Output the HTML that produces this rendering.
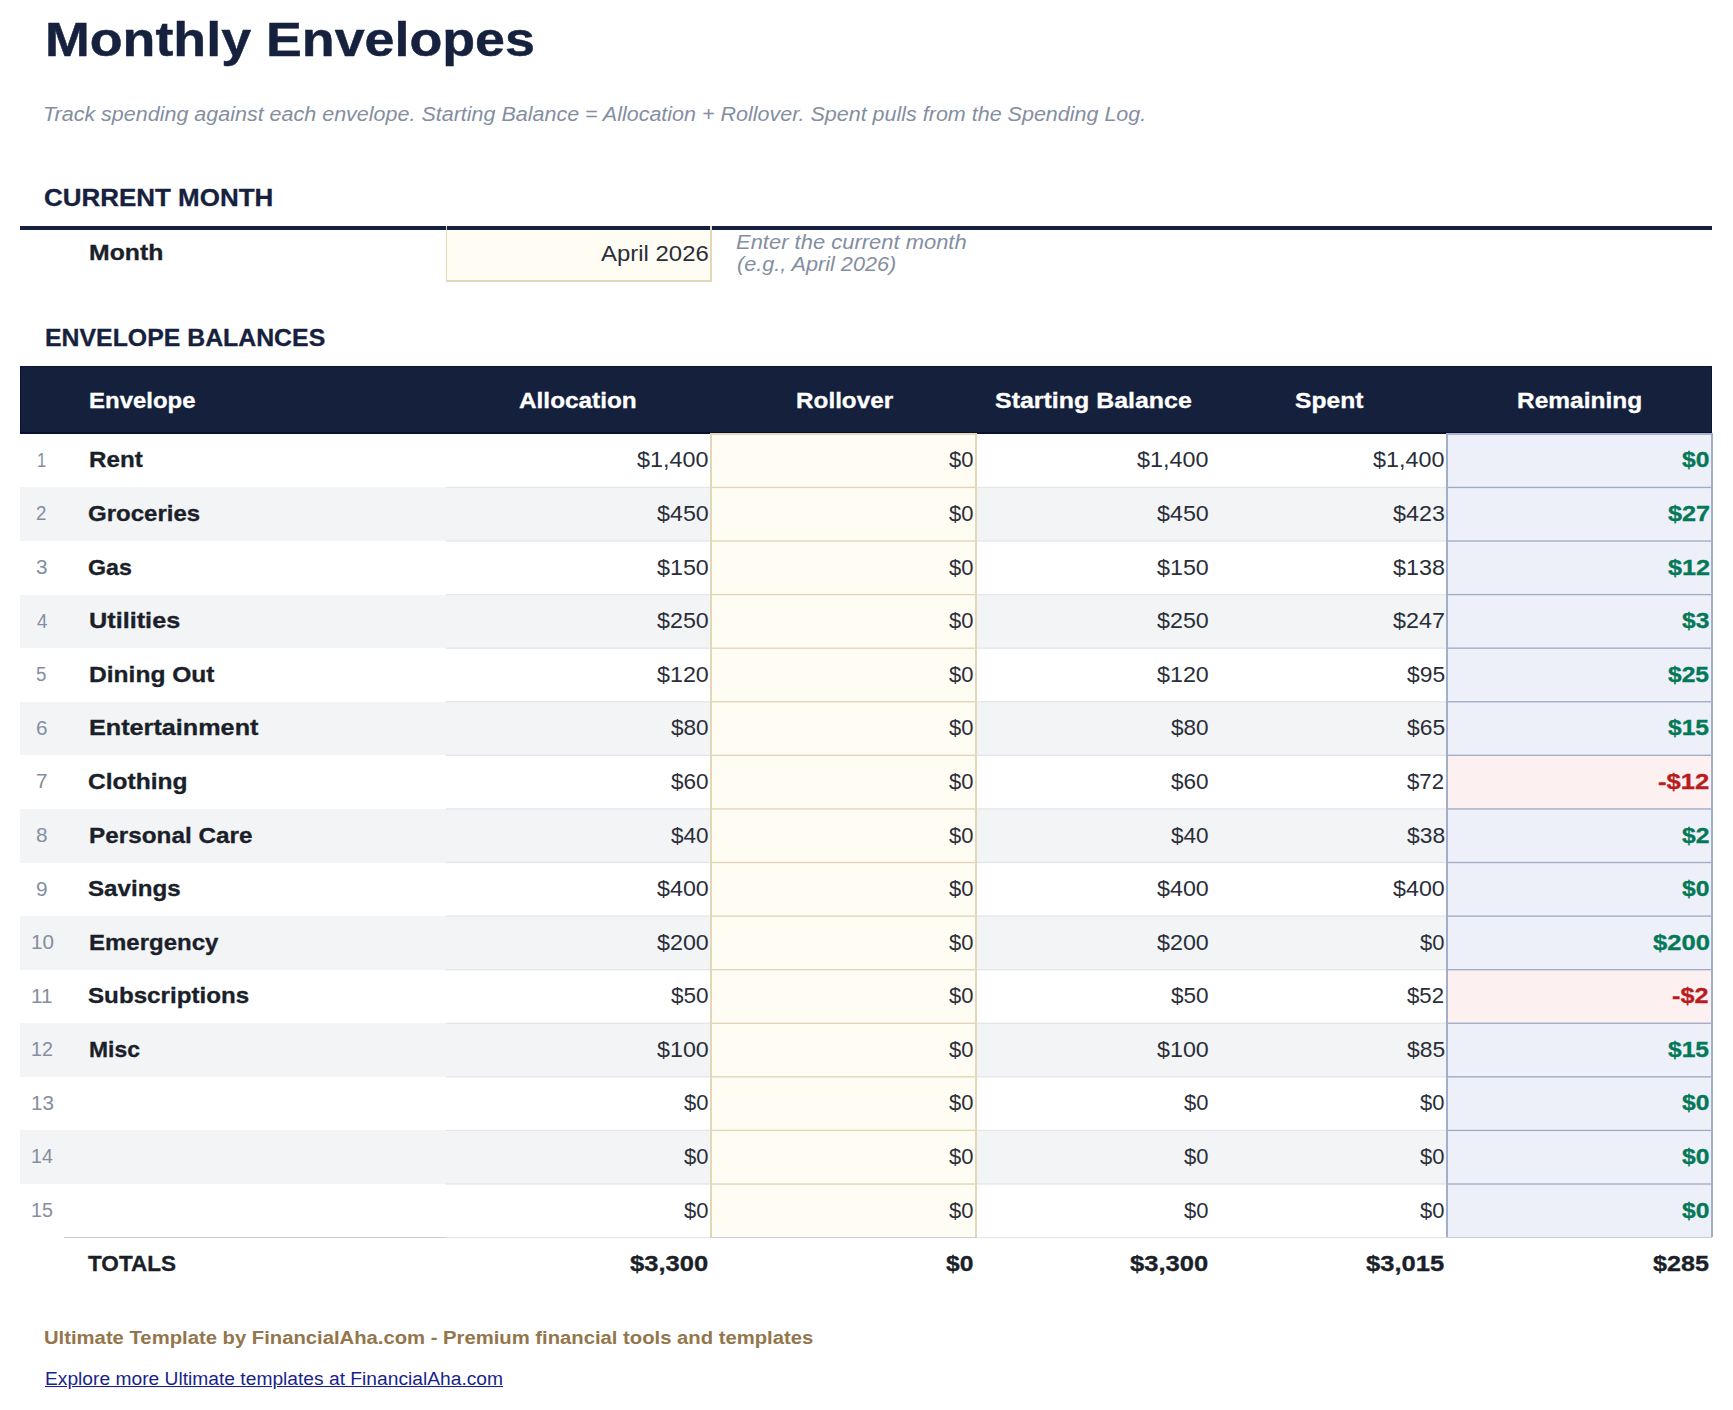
<!DOCTYPE html>
<html><head><meta charset="utf-8"><style>
html,body{margin:0;padding:0;background:#fff;}
body{width:1733px;height:1410px;position:relative;overflow:hidden;font-family:"Liberation Sans", sans-serif;}
.t{position:absolute;line-height:0;white-space:nowrap;}
.r{position:absolute;}
</style></head><body>
<div class="r" style="left:20px;top:226px;width:1692px;height:4px;background:#16213e;"></div>
<div class="r" style="left:446px;top:226px;width:1px;height:56px;background:#e2d8b8;"></div>
<div class="r" style="left:710px;top:226px;width:2px;height:56px;background:#e2d8b8;"></div>
<div class="r" style="left:447px;top:231px;width:263px;height:49px;background:#fffcf4;"></div>
<div class="r" style="left:446px;top:280px;width:266px;height:2px;background:#e2d8b8;"></div>
<div class="r" style="left:20px;top:366px;width:1692px;height:68px;background:#15213c;"></div>
<div class="r" style="left:20px;top:366px;width:1692px;height:1px;background:#0b1533;"></div>
<div class="r" style="left:20px;top:366px;width:1px;height:68px;background:#0b1533;"></div>
<div class="r" style="left:1711px;top:366px;width:1px;height:68px;background:#0b1533;"></div>
<div class="r" style="left:20px;top:432px;width:1692px;height:2px;background:#081130;"></div>
<div class="r" style="left:711px;top:433.85px;width:265px;height:53.58299999999997px;background:#fffcf3;"></div>
<div class="r" style="left:1447px;top:433.85px;width:265px;height:53.58299999999997px;background:#edf0f8;"></div>
<div class="r" style="left:20px;top:487.433px;width:1692px;height:53.58299999999997px;background:#f3f4f6;"></div>
<div class="r" style="left:711px;top:487.433px;width:265px;height:53.58299999999997px;background:#fffcf3;"></div>
<div class="r" style="left:1447px;top:487.433px;width:265px;height:53.58299999999997px;background:#edf0f8;"></div>
<div class="r" style="left:711px;top:541.0160000000001px;width:265px;height:53.58299999999997px;background:#fffcf3;"></div>
<div class="r" style="left:1447px;top:541.0160000000001px;width:265px;height:53.58299999999997px;background:#edf0f8;"></div>
<div class="r" style="left:20px;top:594.599px;width:1692px;height:53.58299999999997px;background:#f3f4f6;"></div>
<div class="r" style="left:711px;top:594.599px;width:265px;height:53.58299999999997px;background:#fffcf3;"></div>
<div class="r" style="left:1447px;top:594.599px;width:265px;height:53.58299999999997px;background:#edf0f8;"></div>
<div class="r" style="left:711px;top:648.182px;width:265px;height:53.58299999999997px;background:#fffcf3;"></div>
<div class="r" style="left:1447px;top:648.182px;width:265px;height:53.58299999999997px;background:#edf0f8;"></div>
<div class="r" style="left:20px;top:701.765px;width:1692px;height:53.58299999999997px;background:#f3f4f6;"></div>
<div class="r" style="left:711px;top:701.765px;width:265px;height:53.58299999999997px;background:#fffcf3;"></div>
<div class="r" style="left:1447px;top:701.765px;width:265px;height:53.58299999999997px;background:#edf0f8;"></div>
<div class="r" style="left:711px;top:755.348px;width:265px;height:53.58299999999997px;background:#fffcf3;"></div>
<div class="r" style="left:1447px;top:755.348px;width:265px;height:53.58299999999997px;background:#fdf0f1;"></div>
<div class="r" style="left:20px;top:808.931px;width:1692px;height:53.58299999999997px;background:#f3f4f6;"></div>
<div class="r" style="left:711px;top:808.931px;width:265px;height:53.58299999999997px;background:#fffcf3;"></div>
<div class="r" style="left:1447px;top:808.931px;width:265px;height:53.58299999999997px;background:#edf0f8;"></div>
<div class="r" style="left:711px;top:862.514px;width:265px;height:53.58299999999997px;background:#fffcf3;"></div>
<div class="r" style="left:1447px;top:862.514px;width:265px;height:53.58299999999997px;background:#edf0f8;"></div>
<div class="r" style="left:20px;top:916.097px;width:1692px;height:53.58299999999997px;background:#f3f4f6;"></div>
<div class="r" style="left:711px;top:916.097px;width:265px;height:53.58299999999997px;background:#fffcf3;"></div>
<div class="r" style="left:1447px;top:916.097px;width:265px;height:53.58299999999997px;background:#edf0f8;"></div>
<div class="r" style="left:711px;top:969.68px;width:265px;height:53.58299999999997px;background:#fffcf3;"></div>
<div class="r" style="left:1447px;top:969.68px;width:265px;height:53.58299999999997px;background:#fdf0f1;"></div>
<div class="r" style="left:20px;top:1023.263px;width:1692px;height:53.58299999999997px;background:#f3f4f6;"></div>
<div class="r" style="left:711px;top:1023.263px;width:265px;height:53.58299999999997px;background:#fffcf3;"></div>
<div class="r" style="left:1447px;top:1023.263px;width:265px;height:53.58299999999997px;background:#edf0f8;"></div>
<div class="r" style="left:711px;top:1076.846px;width:265px;height:53.583000000000084px;background:#fffcf3;"></div>
<div class="r" style="left:1447px;top:1076.846px;width:265px;height:53.583000000000084px;background:#edf0f8;"></div>
<div class="r" style="left:20px;top:1130.429px;width:1692px;height:53.583000000000084px;background:#f3f4f6;"></div>
<div class="r" style="left:711px;top:1130.429px;width:265px;height:53.583000000000084px;background:#fffcf3;"></div>
<div class="r" style="left:1447px;top:1130.429px;width:265px;height:53.583000000000084px;background:#edf0f8;"></div>
<div class="r" style="left:711px;top:1184.0120000000002px;width:265px;height:53.583000000000084px;background:#fffcf3;"></div>
<div class="r" style="left:1447px;top:1184.0120000000002px;width:265px;height:53.583000000000084px;background:#edf0f8;"></div>
<div class="r" style="left:710px;top:433px;width:267px;height:2px;background:#e4d9b9;"></div>
<div class="r" style="left:1446px;top:433px;width:267px;height:2px;background:#abb4cd;"></div>
<div class="r" style="left:710px;top:433px;width:2px;height:804px;background:#e2d8b8;"></div>
<div class="r" style="left:975px;top:433px;width:2px;height:804px;background:#e2d8b8;"></div>
<div class="r" style="left:1446px;top:433px;width:2px;height:804px;background:#a3aec8;"></div>
<div class="r" style="left:1711px;top:433px;width:2px;height:804px;background:#a3aec8;"></div>
<div class="r" style="left:64px;top:1237px;width:1648px;height:1px;background:#c8cdd8;"></div>
<svg width="1733" height="1410" style="position:absolute;left:0;top:0"><rect x="446" y="486.767" width="264" height="1.333" fill="#e4e6ec"/><rect x="977" y="486.767" width="234" height="1.333" fill="#e4e6ec"/><rect x="1211" y="486.767" width="235" height="1.333" fill="#e4e6ec"/><rect x="446" y="540.349" width="264" height="1.333" fill="#e4e6ec"/><rect x="977" y="540.349" width="234" height="1.333" fill="#e4e6ec"/><rect x="1211" y="540.349" width="235" height="1.333" fill="#e4e6ec"/><rect x="446" y="593.933" width="264" height="1.333" fill="#e4e6ec"/><rect x="977" y="593.933" width="234" height="1.333" fill="#e4e6ec"/><rect x="1211" y="593.933" width="235" height="1.333" fill="#e4e6ec"/><rect x="446" y="647.515" width="264" height="1.333" fill="#e4e6ec"/><rect x="977" y="647.515" width="234" height="1.333" fill="#e4e6ec"/><rect x="1211" y="647.515" width="235" height="1.333" fill="#e4e6ec"/><rect x="446" y="701.098" width="264" height="1.333" fill="#e4e6ec"/><rect x="977" y="701.098" width="234" height="1.333" fill="#e4e6ec"/><rect x="1211" y="701.098" width="235" height="1.333" fill="#e4e6ec"/><rect x="446" y="754.681" width="264" height="1.333" fill="#e4e6ec"/><rect x="977" y="754.681" width="234" height="1.333" fill="#e4e6ec"/><rect x="1211" y="754.681" width="235" height="1.333" fill="#e4e6ec"/><rect x="446" y="808.264" width="264" height="1.333" fill="#e4e6ec"/><rect x="977" y="808.264" width="234" height="1.333" fill="#e4e6ec"/><rect x="1211" y="808.264" width="235" height="1.333" fill="#e4e6ec"/><rect x="446" y="861.847" width="264" height="1.333" fill="#e4e6ec"/><rect x="977" y="861.847" width="234" height="1.333" fill="#e4e6ec"/><rect x="1211" y="861.847" width="235" height="1.333" fill="#e4e6ec"/><rect x="446" y="915.430" width="264" height="1.333" fill="#e4e6ec"/><rect x="977" y="915.430" width="234" height="1.333" fill="#e4e6ec"/><rect x="1211" y="915.430" width="235" height="1.333" fill="#e4e6ec"/><rect x="446" y="969.013" width="264" height="1.333" fill="#e4e6ec"/><rect x="977" y="969.013" width="234" height="1.333" fill="#e4e6ec"/><rect x="1211" y="969.013" width="235" height="1.333" fill="#e4e6ec"/><rect x="446" y="1022.596" width="264" height="1.333" fill="#e4e6ec"/><rect x="977" y="1022.596" width="234" height="1.333" fill="#e4e6ec"/><rect x="1211" y="1022.596" width="235" height="1.333" fill="#e4e6ec"/><rect x="446" y="1076.179" width="264" height="1.333" fill="#e4e6ec"/><rect x="977" y="1076.179" width="234" height="1.333" fill="#e4e6ec"/><rect x="1211" y="1076.179" width="235" height="1.333" fill="#e4e6ec"/><rect x="446" y="1129.763" width="264" height="1.333" fill="#e4e6ec"/><rect x="977" y="1129.763" width="234" height="1.333" fill="#e4e6ec"/><rect x="1211" y="1129.763" width="235" height="1.333" fill="#e4e6ec"/><rect x="446" y="1183.346" width="264" height="1.333" fill="#e4e6ec"/><rect x="977" y="1183.346" width="234" height="1.333" fill="#e4e6ec"/><rect x="1211" y="1183.346" width="235" height="1.333" fill="#e4e6ec"/><rect x="446" y="1236.929" width="264" height="1.333" fill="#e4e6ec"/><rect x="977" y="1236.929" width="234" height="1.333" fill="#e4e6ec"/><rect x="1211" y="1236.929" width="235" height="1.333" fill="#e4e6ec"/><rect x="712" y="486.767" width="263" height="1.333" fill="#e0d5b5"/><rect x="1448" y="486.767" width="263" height="1.333" fill="#a0abc6"/><rect x="712" y="540.350" width="263" height="1.333" fill="#e0d5b5"/><rect x="1448" y="540.350" width="263" height="1.333" fill="#a0abc6"/><rect x="712" y="593.933" width="263" height="1.333" fill="#e0d5b5"/><rect x="1448" y="593.933" width="263" height="1.333" fill="#a0abc6"/><rect x="712" y="647.515" width="263" height="1.333" fill="#e0d5b5"/><rect x="1448" y="647.515" width="263" height="1.333" fill="#a0abc6"/><rect x="712" y="701.098" width="263" height="1.333" fill="#e0d5b5"/><rect x="1448" y="701.098" width="263" height="1.333" fill="#a0abc6"/><rect x="712" y="754.681" width="263" height="1.333" fill="#e0d5b5"/><rect x="1448" y="754.681" width="263" height="1.333" fill="#a0abc6"/><rect x="712" y="808.264" width="263" height="1.333" fill="#e0d5b5"/><rect x="1448" y="808.264" width="263" height="1.333" fill="#a0abc6"/><rect x="712" y="861.847" width="263" height="1.333" fill="#e0d5b5"/><rect x="1448" y="861.847" width="263" height="1.333" fill="#a0abc6"/><rect x="712" y="915.430" width="263" height="1.333" fill="#e0d5b5"/><rect x="1448" y="915.430" width="263" height="1.333" fill="#a0abc6"/><rect x="712" y="969.013" width="263" height="1.333" fill="#e0d5b5"/><rect x="1448" y="969.013" width="263" height="1.333" fill="#a0abc6"/><rect x="712" y="1022.596" width="263" height="1.333" fill="#e0d5b5"/><rect x="1448" y="1022.596" width="263" height="1.333" fill="#a0abc6"/><rect x="712" y="1076.179" width="263" height="1.333" fill="#e0d5b5"/><rect x="1448" y="1076.179" width="263" height="1.333" fill="#a0abc6"/><rect x="712" y="1129.763" width="263" height="1.333" fill="#e0d5b5"/><rect x="1448" y="1129.763" width="263" height="1.333" fill="#a0abc6"/><rect x="712" y="1183.346" width="263" height="1.333" fill="#e0d5b5"/><rect x="1448" y="1183.346" width="263" height="1.333" fill="#a0abc6"/></svg>
<div class="t" id="t0" style="left:45.49px;top:39.80px;font-size:46.000px;font-weight:bold;font-style:normal;color:#16213e;transform:scale(1.1687,1.0500);transform-origin:0 15.94px;-webkit-text-stroke:0.45px currentColor;">Monthly Envelopes</div>
<div class="t" id="t1" style="left:42.72px;top:115.16px;font-size:18.900px;font-weight:normal;font-style:italic;color:#848ea1;transform:scale(1.1378,1.0500);transform-origin:0 6.55px;">Track spending against each envelope. Starting Balance = Allocation + Rollover. Spent pulls from the Spending Log.</div>
<div class="t" id="t2" style="left:43.89px;top:197.98px;font-size:23.330px;font-weight:bold;font-style:normal;color:#16213e;transform:scale(1.1127,1.0500);transform-origin:0 8.08px;-webkit-text-stroke:0.3px currentColor;">CURRENT MONTH</div>
<div class="t" id="t3" style="left:88.82px;top:253.41px;font-size:21.000px;font-weight:bold;font-style:normal;color:#1b1f2a;transform:scale(1.1803,1.0500);transform-origin:0 7.28px;-webkit-text-stroke:0.3px currentColor;">Month</div>
<div class="t" id="t4" style="left:601.40px;top:253.51px;font-size:21.000px;font-weight:normal;font-style:normal;color:#2a2e39;transform:scale(1.1399,1.0500);transform-origin:0 7.28px;">April 2026</div>
<div class="t" id="t5" style="left:735.84px;top:242.66px;font-size:18.900px;font-weight:normal;font-style:italic;color:#848ea1;transform:scale(1.1624,1.0500);transform-origin:0 6.55px;">Enter the current month</div>
<div class="t" id="t6" style="left:736.85px;top:264.86px;font-size:18.900px;font-weight:normal;font-style:italic;color:#848ea1;transform:scale(1.1460,1.0500);transform-origin:0 6.55px;">(e.g., April 2026)</div>
<div class="t" id="t7" style="left:44.94px;top:337.58px;font-size:23.330px;font-weight:bold;font-style:normal;color:#16213e;transform:scale(1.0649,1.0500);transform-origin:0 8.08px;-webkit-text-stroke:0.3px currentColor;">ENVELOPE BALANCES</div>
<div class="t" id="t8" style="left:88.86px;top:400.51px;font-size:21.000px;font-weight:bold;font-style:normal;color:#ffffff;transform:scale(1.1413,1.0500);transform-origin:0 7.28px;-webkit-text-stroke:0.3px currentColor;">Envelope</div>
<div class="t" id="t9" style="left:519.23px;top:400.51px;font-size:21.000px;font-weight:bold;font-style:normal;color:#ffffff;transform:scale(1.1601,1.0500);transform-origin:0 7.28px;-webkit-text-stroke:0.3px currentColor;">Allocation</div>
<div class="t" id="t10" style="left:796.43px;top:400.51px;font-size:21.000px;font-weight:bold;font-style:normal;color:#ffffff;transform:scale(1.1566,1.0500);transform-origin:0 7.28px;-webkit-text-stroke:0.3px currentColor;">Rollover</div>
<div class="t" id="t11" style="left:994.74px;top:400.51px;font-size:21.000px;font-weight:bold;font-style:normal;color:#ffffff;transform:scale(1.1879,1.0500);transform-origin:0 7.28px;-webkit-text-stroke:0.3px currentColor;">Starting Balance</div>
<div class="t" id="t12" style="left:1295.18px;top:400.51px;font-size:21.000px;font-weight:bold;font-style:normal;color:#ffffff;transform:scale(1.1724,1.0500);transform-origin:0 7.28px;-webkit-text-stroke:0.3px currentColor;">Spent</div>
<div class="t" id="t13" style="left:1517.36px;top:400.51px;font-size:21.000px;font-weight:bold;font-style:normal;color:#ffffff;transform:scale(1.1667,1.0500);transform-origin:0 7.28px;-webkit-text-stroke:0.3px currentColor;">Remaining</div>
<div class="t" id="t14" style="left:37.17px;top:460.89px;font-size:18.670px;font-weight:normal;font-style:normal;color:#848ea1;transform:scale(0.8889,1.0500);transform-origin:0 6.47px;">1</div>
<div class="t" id="t15" style="left:88.85px;top:460.46px;font-size:21.000px;font-weight:bold;font-style:normal;color:#1b1f2a;transform:scale(1.1522,1.0500);transform-origin:0 7.28px;-webkit-text-stroke:0.3px currentColor;">Rent</div>
<div class="t" id="t16" style="left:637.45px;top:460.46px;font-size:21.000px;font-weight:normal;font-style:normal;color:#2a2e39;transform:scale(1.1113,1.0500);transform-origin:0 7.28px;">$1,400</div>
<div class="t" id="t17" style="left:949.19px;top:460.46px;font-size:21.000px;font-weight:normal;font-style:normal;color:#2a2e39;transform:scale(1.0473,1.0500);transform-origin:0 7.28px;">$0</div>
<div class="t" id="t18" style="left:1137.45px;top:460.46px;font-size:21.000px;font-weight:normal;font-style:normal;color:#2a2e39;transform:scale(1.1113,1.0500);transform-origin:0 7.28px;">$1,400</div>
<div class="t" id="t19" style="left:1373.45px;top:460.46px;font-size:21.000px;font-weight:normal;font-style:normal;color:#2a2e39;transform:scale(1.1113,1.0500);transform-origin:0 7.28px;">$1,400</div>
<div class="t" id="t20" style="left:1681.72px;top:460.46px;font-size:21.000px;font-weight:bold;font-style:normal;color:#047857;transform:scale(1.1739,1.0500);transform-origin:0 7.28px;-webkit-text-stroke:0.3px currentColor;">$0</div>
<div class="t" id="t21" style="left:36.06px;top:514.47px;font-size:18.670px;font-weight:normal;font-style:normal;color:#848ea1;transform:scale(1.0000,1.0500);transform-origin:0 6.47px;">2</div>
<div class="t" id="t22" style="left:87.86px;top:514.04px;font-size:21.000px;font-weight:bold;font-style:normal;color:#1b1f2a;transform:scale(1.1443,1.0500);transform-origin:0 7.28px;-webkit-text-stroke:0.3px currentColor;">Groceries</div>
<div class="t" id="t23" style="left:656.50px;top:514.04px;font-size:21.000px;font-weight:normal;font-style:normal;color:#2a2e39;transform:scale(1.1087,1.0500);transform-origin:0 7.28px;">$450</div>
<div class="t" id="t24" style="left:949.19px;top:514.04px;font-size:21.000px;font-weight:normal;font-style:normal;color:#2a2e39;transform:scale(1.0473,1.0500);transform-origin:0 7.28px;">$0</div>
<div class="t" id="t25" style="left:1156.50px;top:514.04px;font-size:21.000px;font-weight:normal;font-style:normal;color:#2a2e39;transform:scale(1.1087,1.0500);transform-origin:0 7.28px;">$450</div>
<div class="t" id="t26" style="left:1393.48px;top:514.04px;font-size:21.000px;font-weight:normal;font-style:normal;color:#2a2e39;transform:scale(1.1115,1.0500);transform-origin:0 7.28px;">$423</div>
<div class="t" id="t27" style="left:1668.19px;top:514.04px;font-size:21.000px;font-weight:bold;font-style:normal;color:#047857;transform:scale(1.2007,1.0500);transform-origin:0 7.28px;-webkit-text-stroke:0.3px currentColor;">$27</div>
<div class="t" id="t28" style="left:35.96px;top:568.05px;font-size:18.670px;font-weight:normal;font-style:normal;color:#848ea1;transform:scale(1.1111,1.0500);transform-origin:0 6.47px;">3</div>
<div class="t" id="t29" style="left:87.89px;top:567.62px;font-size:21.000px;font-weight:bold;font-style:normal;color:#1b1f2a;transform:scale(1.1053,1.0500);transform-origin:0 7.28px;-webkit-text-stroke:0.3px currentColor;">Gas</div>
<div class="t" id="t30" style="left:656.50px;top:567.62px;font-size:21.000px;font-weight:normal;font-style:normal;color:#2a2e39;transform:scale(1.1087,1.0500);transform-origin:0 7.28px;">$150</div>
<div class="t" id="t31" style="left:949.19px;top:567.62px;font-size:21.000px;font-weight:normal;font-style:normal;color:#2a2e39;transform:scale(1.0473,1.0500);transform-origin:0 7.28px;">$0</div>
<div class="t" id="t32" style="left:1156.50px;top:567.62px;font-size:21.000px;font-weight:normal;font-style:normal;color:#2a2e39;transform:scale(1.1087,1.0500);transform-origin:0 7.28px;">$150</div>
<div class="t" id="t33" style="left:1393.48px;top:567.62px;font-size:21.000px;font-weight:normal;font-style:normal;color:#2a2e39;transform:scale(1.1115,1.0500);transform-origin:0 7.28px;">$138</div>
<div class="t" id="t34" style="left:1668.19px;top:567.62px;font-size:21.000px;font-weight:bold;font-style:normal;color:#047857;transform:scale(1.2007,1.0500);transform-origin:0 7.28px;-webkit-text-stroke:0.3px currentColor;">$12</div>
<div class="t" id="t35" style="left:37.06px;top:621.63px;font-size:18.670px;font-weight:normal;font-style:normal;color:#848ea1;transform:scale(1.0000,1.0500);transform-origin:0 6.47px;">4</div>
<div class="t" id="t36" style="left:88.80px;top:621.20px;font-size:21.000px;font-weight:bold;font-style:normal;color:#1b1f2a;transform:scale(1.2029,1.0500);transform-origin:0 7.28px;-webkit-text-stroke:0.3px currentColor;">Utilities</div>
<div class="t" id="t37" style="left:656.50px;top:621.20px;font-size:21.000px;font-weight:normal;font-style:normal;color:#2a2e39;transform:scale(1.1087,1.0500);transform-origin:0 7.28px;">$250</div>
<div class="t" id="t38" style="left:949.19px;top:621.20px;font-size:21.000px;font-weight:normal;font-style:normal;color:#2a2e39;transform:scale(1.0473,1.0500);transform-origin:0 7.28px;">$0</div>
<div class="t" id="t39" style="left:1156.50px;top:621.20px;font-size:21.000px;font-weight:normal;font-style:normal;color:#2a2e39;transform:scale(1.1087,1.0500);transform-origin:0 7.28px;">$250</div>
<div class="t" id="t40" style="left:1393.48px;top:621.20px;font-size:21.000px;font-weight:normal;font-style:normal;color:#2a2e39;transform:scale(1.1115,1.0500);transform-origin:0 7.28px;">$247</div>
<div class="t" id="t41" style="left:1681.72px;top:621.20px;font-size:21.000px;font-weight:bold;font-style:normal;color:#047857;transform:scale(1.1739,1.0500);transform-origin:0 7.28px;-webkit-text-stroke:0.3px currentColor;">$3</div>
<div class="t" id="t42" style="left:36.06px;top:675.22px;font-size:18.670px;font-weight:normal;font-style:normal;color:#848ea1;transform:scale(1.0000,1.0500);transform-origin:0 6.47px;">5</div>
<div class="t" id="t43" style="left:88.83px;top:674.79px;font-size:21.000px;font-weight:bold;font-style:normal;color:#1b1f2a;transform:scale(1.1699,1.0500);transform-origin:0 7.28px;-webkit-text-stroke:0.3px currentColor;">Dining Out</div>
<div class="t" id="t44" style="left:656.50px;top:674.79px;font-size:21.000px;font-weight:normal;font-style:normal;color:#2a2e39;transform:scale(1.1087,1.0500);transform-origin:0 7.28px;">$120</div>
<div class="t" id="t45" style="left:949.19px;top:674.79px;font-size:21.000px;font-weight:normal;font-style:normal;color:#2a2e39;transform:scale(1.0473,1.0500);transform-origin:0 7.28px;">$0</div>
<div class="t" id="t46" style="left:1156.50px;top:674.79px;font-size:21.000px;font-weight:normal;font-style:normal;color:#2a2e39;transform:scale(1.1087,1.0500);transform-origin:0 7.28px;">$120</div>
<div class="t" id="t47" style="left:1406.90px;top:674.79px;font-size:21.000px;font-weight:normal;font-style:normal;color:#2a2e39;transform:scale(1.0882,1.0500);transform-origin:0 7.28px;">$95</div>
<div class="t" id="t48" style="left:1668.18px;top:674.79px;font-size:21.000px;font-weight:bold;font-style:normal;color:#047857;transform:scale(1.1714,1.0500);transform-origin:0 7.28px;-webkit-text-stroke:0.3px currentColor;">$25</div>
<div class="t" id="t49" style="left:35.96px;top:728.80px;font-size:18.670px;font-weight:normal;font-style:normal;color:#848ea1;transform:scale(1.1111,1.0500);transform-origin:0 6.47px;">6</div>
<div class="t" id="t50" style="left:88.80px;top:728.37px;font-size:21.000px;font-weight:bold;font-style:normal;color:#1b1f2a;transform:scale(1.2000,1.0500);transform-origin:0 7.28px;-webkit-text-stroke:0.3px currentColor;">Entertainment</div>
<div class="t" id="t51" style="left:670.90px;top:728.37px;font-size:21.000px;font-weight:normal;font-style:normal;color:#2a2e39;transform:scale(1.0743,1.0500);transform-origin:0 7.28px;">$80</div>
<div class="t" id="t52" style="left:949.19px;top:728.37px;font-size:21.000px;font-weight:normal;font-style:normal;color:#2a2e39;transform:scale(1.0473,1.0500);transform-origin:0 7.28px;">$0</div>
<div class="t" id="t53" style="left:1170.90px;top:728.37px;font-size:21.000px;font-weight:normal;font-style:normal;color:#2a2e39;transform:scale(1.0743,1.0500);transform-origin:0 7.28px;">$80</div>
<div class="t" id="t54" style="left:1406.90px;top:728.37px;font-size:21.000px;font-weight:normal;font-style:normal;color:#2a2e39;transform:scale(1.0882,1.0500);transform-origin:0 7.28px;">$65</div>
<div class="t" id="t55" style="left:1668.18px;top:728.37px;font-size:21.000px;font-weight:bold;font-style:normal;color:#047857;transform:scale(1.1714,1.0500);transform-origin:0 7.28px;-webkit-text-stroke:0.3px currentColor;">$15</div>
<div class="t" id="t56" style="left:35.96px;top:782.38px;font-size:18.670px;font-weight:normal;font-style:normal;color:#848ea1;transform:scale(1.1111,1.0500);transform-origin:0 6.47px;">7</div>
<div class="t" id="t57" style="left:87.83px;top:781.95px;font-size:21.000px;font-weight:bold;font-style:normal;color:#1b1f2a;transform:scale(1.1687,1.0500);transform-origin:0 7.28px;-webkit-text-stroke:0.3px currentColor;">Clothing</div>
<div class="t" id="t58" style="left:670.90px;top:781.95px;font-size:21.000px;font-weight:normal;font-style:normal;color:#2a2e39;transform:scale(1.0743,1.0500);transform-origin:0 7.28px;">$60</div>
<div class="t" id="t59" style="left:949.19px;top:781.95px;font-size:21.000px;font-weight:normal;font-style:normal;color:#2a2e39;transform:scale(1.0473,1.0500);transform-origin:0 7.28px;">$0</div>
<div class="t" id="t60" style="left:1170.90px;top:781.95px;font-size:21.000px;font-weight:normal;font-style:normal;color:#2a2e39;transform:scale(1.0743,1.0500);transform-origin:0 7.28px;">$60</div>
<div class="t" id="t61" style="left:1406.90px;top:781.95px;font-size:21.000px;font-weight:normal;font-style:normal;color:#2a2e39;transform:scale(1.0588,1.0500);transform-origin:0 7.28px;">$72</div>
<div class="t" id="t62" style="left:1658.31px;top:781.95px;font-size:21.000px;font-weight:bold;font-style:normal;color:#b91c1c;transform:scale(1.2195,1.0500);transform-origin:0 7.28px;-webkit-text-stroke:0.3px currentColor;">-$12</div>
<div class="t" id="t63" style="left:35.96px;top:835.97px;font-size:18.670px;font-weight:normal;font-style:normal;color:#848ea1;transform:scale(1.1111,1.0500);transform-origin:0 6.47px;">8</div>
<div class="t" id="t64" style="left:88.84px;top:835.54px;font-size:21.000px;font-weight:bold;font-style:normal;color:#1b1f2a;transform:scale(1.1571,1.0500);transform-origin:0 7.28px;-webkit-text-stroke:0.3px currentColor;">Personal Care</div>
<div class="t" id="t65" style="left:670.90px;top:835.54px;font-size:21.000px;font-weight:normal;font-style:normal;color:#2a2e39;transform:scale(1.0743,1.0500);transform-origin:0 7.28px;">$40</div>
<div class="t" id="t66" style="left:949.19px;top:835.54px;font-size:21.000px;font-weight:normal;font-style:normal;color:#2a2e39;transform:scale(1.0473,1.0500);transform-origin:0 7.28px;">$0</div>
<div class="t" id="t67" style="left:1170.90px;top:835.54px;font-size:21.000px;font-weight:normal;font-style:normal;color:#2a2e39;transform:scale(1.0743,1.0500);transform-origin:0 7.28px;">$40</div>
<div class="t" id="t68" style="left:1406.90px;top:835.54px;font-size:21.000px;font-weight:normal;font-style:normal;color:#2a2e39;transform:scale(1.0882,1.0500);transform-origin:0 7.28px;">$38</div>
<div class="t" id="t69" style="left:1681.72px;top:835.54px;font-size:21.000px;font-weight:bold;font-style:normal;color:#047857;transform:scale(1.1739,1.0500);transform-origin:0 7.28px;-webkit-text-stroke:0.3px currentColor;">$2</div>
<div class="t" id="t70" style="left:35.96px;top:889.55px;font-size:18.670px;font-weight:normal;font-style:normal;color:#848ea1;transform:scale(1.1111,1.0500);transform-origin:0 6.47px;">9</div>
<div class="t" id="t71" style="left:87.99px;top:889.12px;font-size:21.000px;font-weight:bold;font-style:normal;color:#1b1f2a;transform:scale(1.1501,1.0500);transform-origin:0 7.28px;-webkit-text-stroke:0.3px currentColor;">Savings</div>
<div class="t" id="t72" style="left:656.50px;top:889.12px;font-size:21.000px;font-weight:normal;font-style:normal;color:#2a2e39;transform:scale(1.1087,1.0500);transform-origin:0 7.28px;">$400</div>
<div class="t" id="t73" style="left:949.19px;top:889.12px;font-size:21.000px;font-weight:normal;font-style:normal;color:#2a2e39;transform:scale(1.0473,1.0500);transform-origin:0 7.28px;">$0</div>
<div class="t" id="t74" style="left:1156.50px;top:889.12px;font-size:21.000px;font-weight:normal;font-style:normal;color:#2a2e39;transform:scale(1.1087,1.0500);transform-origin:0 7.28px;">$400</div>
<div class="t" id="t75" style="left:1392.50px;top:889.12px;font-size:21.000px;font-weight:normal;font-style:normal;color:#2a2e39;transform:scale(1.1087,1.0500);transform-origin:0 7.28px;">$400</div>
<div class="t" id="t76" style="left:1681.72px;top:889.12px;font-size:21.000px;font-weight:bold;font-style:normal;color:#047857;transform:scale(1.1739,1.0500);transform-origin:0 7.28px;-webkit-text-stroke:0.3px currentColor;">$0</div>
<div class="t" id="t77" style="left:31.03px;top:943.13px;font-size:18.670px;font-weight:normal;font-style:normal;color:#848ea1;transform:scale(1.1053,1.0500);transform-origin:0 6.47px;">10</div>
<div class="t" id="t78" style="left:88.86px;top:942.70px;font-size:21.000px;font-weight:bold;font-style:normal;color:#1b1f2a;transform:scale(1.1429,1.0500);transform-origin:0 7.28px;-webkit-text-stroke:0.3px currentColor;">Emergency</div>
<div class="t" id="t79" style="left:656.50px;top:942.70px;font-size:21.000px;font-weight:normal;font-style:normal;color:#2a2e39;transform:scale(1.1087,1.0500);transform-origin:0 7.28px;">$200</div>
<div class="t" id="t80" style="left:949.19px;top:942.70px;font-size:21.000px;font-weight:normal;font-style:normal;color:#2a2e39;transform:scale(1.0473,1.0500);transform-origin:0 7.28px;">$0</div>
<div class="t" id="t81" style="left:1156.50px;top:942.70px;font-size:21.000px;font-weight:normal;font-style:normal;color:#2a2e39;transform:scale(1.1087,1.0500);transform-origin:0 7.28px;">$200</div>
<div class="t" id="t82" style="left:1420.19px;top:942.70px;font-size:21.000px;font-weight:normal;font-style:normal;color:#2a2e39;transform:scale(1.0473,1.0500);transform-origin:0 7.28px;">$0</div>
<div class="t" id="t83" style="left:1653.45px;top:942.70px;font-size:21.000px;font-weight:bold;font-style:normal;color:#047857;transform:scale(1.2174,1.0500);transform-origin:0 7.28px;-webkit-text-stroke:0.3px currentColor;">$200</div>
<div class="t" id="t84" style="left:31.03px;top:996.72px;font-size:18.670px;font-weight:normal;font-style:normal;color:#848ea1;transform:scale(1.1111,1.0500);transform-origin:0 6.47px;">11</div>
<div class="t" id="t85" style="left:88.00px;top:996.28px;font-size:21.000px;font-weight:bold;font-style:normal;color:#1b1f2a;transform:scale(1.1511,1.0500);transform-origin:0 7.28px;-webkit-text-stroke:0.3px currentColor;">Subscriptions</div>
<div class="t" id="t86" style="left:670.90px;top:996.28px;font-size:21.000px;font-weight:normal;font-style:normal;color:#2a2e39;transform:scale(1.0743,1.0500);transform-origin:0 7.28px;">$50</div>
<div class="t" id="t87" style="left:949.19px;top:996.28px;font-size:21.000px;font-weight:normal;font-style:normal;color:#2a2e39;transform:scale(1.0473,1.0500);transform-origin:0 7.28px;">$0</div>
<div class="t" id="t88" style="left:1170.90px;top:996.28px;font-size:21.000px;font-weight:normal;font-style:normal;color:#2a2e39;transform:scale(1.0743,1.0500);transform-origin:0 7.28px;">$50</div>
<div class="t" id="t89" style="left:1406.90px;top:996.28px;font-size:21.000px;font-weight:normal;font-style:normal;color:#2a2e39;transform:scale(1.0588,1.0500);transform-origin:0 7.28px;">$52</div>
<div class="t" id="t90" style="left:1672.03px;top:996.28px;font-size:21.000px;font-weight:bold;font-style:normal;color:#b91c1c;transform:scale(1.2010,1.0500);transform-origin:0 7.28px;-webkit-text-stroke:0.3px currentColor;">-$2</div>
<div class="t" id="t91" style="left:31.08px;top:1050.30px;font-size:18.670px;font-weight:normal;font-style:normal;color:#848ea1;transform:scale(1.0526,1.0500);transform-origin:0 6.47px;">12</div>
<div class="t" id="t92" style="left:88.91px;top:1049.87px;font-size:21.000px;font-weight:bold;font-style:normal;color:#1b1f2a;transform:scale(1.0893,1.0500);transform-origin:0 7.28px;-webkit-text-stroke:0.3px currentColor;">Misc</div>
<div class="t" id="t93" style="left:656.50px;top:1049.87px;font-size:21.000px;font-weight:normal;font-style:normal;color:#2a2e39;transform:scale(1.1087,1.0500);transform-origin:0 7.28px;">$100</div>
<div class="t" id="t94" style="left:949.19px;top:1049.87px;font-size:21.000px;font-weight:normal;font-style:normal;color:#2a2e39;transform:scale(1.0473,1.0500);transform-origin:0 7.28px;">$0</div>
<div class="t" id="t95" style="left:1156.50px;top:1049.87px;font-size:21.000px;font-weight:normal;font-style:normal;color:#2a2e39;transform:scale(1.1087,1.0500);transform-origin:0 7.28px;">$100</div>
<div class="t" id="t96" style="left:1406.90px;top:1049.87px;font-size:21.000px;font-weight:normal;font-style:normal;color:#2a2e39;transform:scale(1.0882,1.0500);transform-origin:0 7.28px;">$85</div>
<div class="t" id="t97" style="left:1668.18px;top:1049.87px;font-size:21.000px;font-weight:bold;font-style:normal;color:#047857;transform:scale(1.1714,1.0500);transform-origin:0 7.28px;-webkit-text-stroke:0.3px currentColor;">$15</div>
<div class="t" id="t98" style="left:31.03px;top:1103.88px;font-size:18.670px;font-weight:normal;font-style:normal;color:#848ea1;transform:scale(1.1053,1.0500);transform-origin:0 6.47px;">13</div>
<div class="t" id="t99" style="left:684.19px;top:1103.45px;font-size:21.000px;font-weight:normal;font-style:normal;color:#2a2e39;transform:scale(1.0473,1.0500);transform-origin:0 7.28px;">$0</div>
<div class="t" id="t100" style="left:949.19px;top:1103.45px;font-size:21.000px;font-weight:normal;font-style:normal;color:#2a2e39;transform:scale(1.0473,1.0500);transform-origin:0 7.28px;">$0</div>
<div class="t" id="t101" style="left:1184.19px;top:1103.45px;font-size:21.000px;font-weight:normal;font-style:normal;color:#2a2e39;transform:scale(1.0473,1.0500);transform-origin:0 7.28px;">$0</div>
<div class="t" id="t102" style="left:1420.19px;top:1103.45px;font-size:21.000px;font-weight:normal;font-style:normal;color:#2a2e39;transform:scale(1.0473,1.0500);transform-origin:0 7.28px;">$0</div>
<div class="t" id="t103" style="left:1681.72px;top:1103.45px;font-size:21.000px;font-weight:bold;font-style:normal;color:#047857;transform:scale(1.1739,1.0500);transform-origin:0 7.28px;-webkit-text-stroke:0.3px currentColor;">$0</div>
<div class="t" id="t104" style="left:31.08px;top:1157.46px;font-size:18.670px;font-weight:normal;font-style:normal;color:#848ea1;transform:scale(1.0500,1.0500);transform-origin:0 6.47px;">14</div>
<div class="t" id="t105" style="left:684.19px;top:1157.03px;font-size:21.000px;font-weight:normal;font-style:normal;color:#2a2e39;transform:scale(1.0473,1.0500);transform-origin:0 7.28px;">$0</div>
<div class="t" id="t106" style="left:949.19px;top:1157.03px;font-size:21.000px;font-weight:normal;font-style:normal;color:#2a2e39;transform:scale(1.0473,1.0500);transform-origin:0 7.28px;">$0</div>
<div class="t" id="t107" style="left:1184.19px;top:1157.03px;font-size:21.000px;font-weight:normal;font-style:normal;color:#2a2e39;transform:scale(1.0473,1.0500);transform-origin:0 7.28px;">$0</div>
<div class="t" id="t108" style="left:1420.19px;top:1157.03px;font-size:21.000px;font-weight:normal;font-style:normal;color:#2a2e39;transform:scale(1.0473,1.0500);transform-origin:0 7.28px;">$0</div>
<div class="t" id="t109" style="left:1681.72px;top:1157.03px;font-size:21.000px;font-weight:bold;font-style:normal;color:#047857;transform:scale(1.1739,1.0500);transform-origin:0 7.28px;-webkit-text-stroke:0.3px currentColor;">$0</div>
<div class="t" id="t110" style="left:31.08px;top:1211.05px;font-size:18.670px;font-weight:normal;font-style:normal;color:#848ea1;transform:scale(1.0526,1.0500);transform-origin:0 6.47px;">15</div>
<div class="t" id="t111" style="left:684.19px;top:1210.62px;font-size:21.000px;font-weight:normal;font-style:normal;color:#2a2e39;transform:scale(1.0473,1.0500);transform-origin:0 7.28px;">$0</div>
<div class="t" id="t112" style="left:949.19px;top:1210.62px;font-size:21.000px;font-weight:normal;font-style:normal;color:#2a2e39;transform:scale(1.0473,1.0500);transform-origin:0 7.28px;">$0</div>
<div class="t" id="t113" style="left:1184.19px;top:1210.62px;font-size:21.000px;font-weight:normal;font-style:normal;color:#2a2e39;transform:scale(1.0473,1.0500);transform-origin:0 7.28px;">$0</div>
<div class="t" id="t114" style="left:1420.19px;top:1210.62px;font-size:21.000px;font-weight:normal;font-style:normal;color:#2a2e39;transform:scale(1.0473,1.0500);transform-origin:0 7.28px;">$0</div>
<div class="t" id="t115" style="left:1681.72px;top:1210.62px;font-size:21.000px;font-weight:bold;font-style:normal;color:#047857;transform:scale(1.1739,1.0500);transform-origin:0 7.28px;-webkit-text-stroke:0.3px currentColor;">$0</div>
<div class="t" id="t116" style="left:88.00px;top:1263.81px;font-size:21.000px;font-weight:bold;font-style:normal;color:#1b1f2a;transform:scale(1.0732,1.0500);transform-origin:0 7.28px;-webkit-text-stroke:0.3px currentColor;">TOTALS</div>
<div class="t" id="t117" style="left:629.94px;top:1263.81px;font-size:21.000px;font-weight:bold;font-style:normal;color:#1b1f2a;transform:scale(1.2188,1.0500);transform-origin:0 7.28px;-webkit-text-stroke:0.3px currentColor;">$3,300</div>
<div class="t" id="t118" style="left:945.72px;top:1263.81px;font-size:21.000px;font-weight:bold;font-style:normal;color:#1b1f2a;transform:scale(1.1739,1.0500);transform-origin:0 7.28px;-webkit-text-stroke:0.3px currentColor;">$0</div>
<div class="t" id="t119" style="left:1129.94px;top:1263.81px;font-size:21.000px;font-weight:bold;font-style:normal;color:#1b1f2a;transform:scale(1.2188,1.0500);transform-origin:0 7.28px;-webkit-text-stroke:0.3px currentColor;">$3,300</div>
<div class="t" id="t120" style="left:1365.94px;top:1263.81px;font-size:21.000px;font-weight:bold;font-style:normal;color:#1b1f2a;transform:scale(1.2188,1.0500);transform-origin:0 7.28px;-webkit-text-stroke:0.3px currentColor;">$3,015</div>
<div class="t" id="t121" style="left:1653.44px;top:1263.81px;font-size:21.000px;font-weight:bold;font-style:normal;color:#1b1f2a;transform:scale(1.1960,1.0500);transform-origin:0 7.28px;-webkit-text-stroke:0.3px currentColor;">$285</div>
<div class="t" id="t122" style="left:43.81px;top:1338.74px;font-size:17.000px;font-weight:bold;font-style:normal;color:#93764c;transform:scale(1.1910,1.0500);transform-origin:0 5.89px;">Ultimate Template by FinancialAha.com - Premium financial tools and templates</div>
<div class="t" id="t123" style="left:44.87px;top:1379.74px;font-size:17.000px;font-weight:normal;font-style:normal;color:#1a1f8a;text-decoration:underline;transform:scale(1.1300,1.0500);transform-origin:0 5.89px;">Explore more Ultimate templates at FinancialAha.com</div>
</body></html>
